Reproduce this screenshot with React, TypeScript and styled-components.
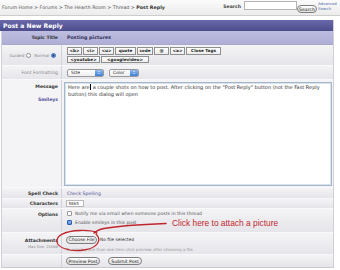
import React from 'react';
import styled, { createGlobalStyle } from 'styled-components';

const GlobalStyle = createGlobalStyle`
  html, body {
    margin: 0;
    padding: 0;
    background: #ffffff;
  }
  body {
    font-family: "DejaVu Sans", Verdana, sans-serif;
    color: #333;
  }
`;

const Page = styled.div`
  position: relative;
  width: 340px;
  height: 270px;
  overflow: hidden;
  background: #fff;
`;

const TopBar = styled.div`
  display: flex;
  align-items: center;
  height: 15px;
  padding-left: 2px;
  background: linear-gradient(#fbfbfb, #ececec);
  border-bottom: 1px solid #cdcdcd;
`;

const Crumbs = styled.div`
  font-size: 4.75px;
  color: #555;
  white-space: nowrap;

  b {
    color: #333;
  }
`;

const SearchArea = styled.div`
  margin-left: auto;
  display: flex;
  align-items: flex-start;
  height: 15px;
  padding-top: 1px;
  box-sizing: border-box;
`;

const SearchLabel = styled.span`
  font-size: 4.6px;
  font-weight: bold;
  color: #444;
  margin-top: 2.5px;
  margin-right: 3px;
`;

const SearchInput = styled.div`
  width: 53px;
  height: 9px;
  background: #fff;
  border: 1px solid #b5b5b5;
  box-sizing: border-box;
`;

const PillButton = styled.span<{ $w?: number }>`
  display: inline-flex;
  align-items: center;
  justify-content: center;
  height: 8px;
  padding: 0 ${({ $w }) => ($w ? 0 : 2)}px;
  width: ${({ $w }) => ($w ? `${$w}px` : 'auto')};
  box-sizing: border-box;
  border: 1px solid #7d7d7d;
  border-radius: 4px;
  background: linear-gradient(#ffffff, #e2e2e2);
  font-size: 4.6px;
  color: #222;
  white-space: nowrap;
  flex-shrink: 0;
`;

const SearchButton = styled(PillButton)`
  margin-top: 4px;
`;

const Advanced = styled.span`
  font-size: 3.8px;
  line-height: 5px;
  color: #4a5fa8;
  margin-left: 1px;
  width: 22px;
  overflow: hidden;
  white-space: nowrap;
`;

const Panel = styled.div`
  margin: 4px 6px 0 1px;
  border-left: 1px solid #cfcfd8;
  border-right: 1px solid #cfcfd8;
  border-bottom: 1px solid #c8c8d2;
`;

const Header = styled.div`
  height: 11px;
  display: flex;
  align-items: center;
  padding-left: 3px;
  background: linear-gradient(#6a6aaa, #4d4d8d);
  color: #fff;
  font-size: 6.1px;
  font-weight: bold;
  margin-left: -2px;
`;

const Row = styled.div<{ $h: number; $tone?: 'topic' | 'plain' }>`
  display: grid;
  grid-template-columns: 60px 1fr;
  height: ${({ $h }) => $h}px;
  box-sizing: border-box;
  border-bottom: 1px solid ${({ $tone }) => ($tone === 'topic' ? '#a9a9cf' : '#f9f9fb')};
  background: ${({ $tone }) =>
    $tone === 'topic'
      ? 'linear-gradient(#bdbde0, #afafd6)'
      : 'linear-gradient(#f4f4f6, #e5e5ea)'};
`;

const Label = styled.div<{ $light?: boolean; $top?: number }>`
  display: flex;
  flex-direction: column;
  align-items: flex-end;
  justify-content: ${({ $top }) => ($top !== undefined ? 'flex-start' : 'center')};
  padding-top: ${({ $top }) => $top ?? 0}px;
  padding-right: 3px;
  border-right: 1px solid #d2d2da;
  font-size: 4.6px;
  font-weight: ${({ $light }) => ($light ? 'normal' : 'bold')};
  color: ${({ $light }) => ($light ? '#858585' : '#333')};
  white-space: nowrap;
  gap: 2px;
`;

const SubNote = styled.span`
  font-size: 3.6px;
  font-weight: normal;
  color: #8a8a8a;
`;

const LinkText = styled.span<{ $bold?: boolean }>`
  color: #4f4f9c;
  font-weight: ${({ $bold }) => ($bold ? 'bold' : 'normal')};
  font-size: 4.6px;
`;

const Cell = styled.div<{ $col?: boolean; $pad?: number }>`
  display: flex;
  flex-direction: ${({ $col }) => ($col ? 'column' : 'row')};
  justify-content: ${({ $col }) => ($col ? 'center' : 'flex-start')};
  align-items: ${({ $col }) => ($col ? 'flex-start' : 'center')};
  padding-left: ${({ $pad }) => $pad ?? 4}px;
  gap: 1px;
  font-size: 4.6px;
  min-width: 0;
`;

const TopicValue = styled.span`
  font-weight: bold;
  color: #33335a;
  font-size: 4.8px;
`;

const RadioGroup = styled.div`
  display: flex;
  align-items: center;
  gap: 1.5px;
  font-size: 4.2px;
  color: #888;
  font-weight: normal;
`;

const Radio = styled.span<{ $on?: boolean }>`
  width: 5px;
  height: 5px;
  border-radius: 50%;
  box-sizing: border-box;
  margin-right: 2px;
  border: 1px solid ${({ $on }) => ($on ? '#3a6bb8' : '#8a8a8a')};
  background: ${({ $on }) =>
    $on ? 'radial-gradient(circle, #1c3f7a 0 0.8px, #6f9fe0 1.2px)' : '#fff'};
`;

const TagLine = styled.div`
  display: flex;
  gap: 1px;
`;

const Tag = styled.span<{ $w: number }>`
  display: inline-flex;
  align-items: center;
  justify-content: center;
  width: ${({ $w }) => $w}px;
  height: 7.5px;
  box-sizing: border-box;
  border: 1px solid #8f8f8f;
  background: linear-gradient(#ffffff, #ececec);
  font-size: 4.2px;
  font-weight: bold;
  color: #222;
  white-space: nowrap;
`;

const SelectBox = styled.span<{ $w: number }>`
  position: relative;
  display: inline-flex;
  align-items: center;
  width: ${({ $w }) => $w}px;
  height: 8px;
  box-sizing: border-box;
  border: 1px solid #9a9a9a;
  border-radius: 2px;
  background: linear-gradient(#ffffff, #eeeeee);
  padding-left: 3px;
  font-size: 4.4px;
  color: #222;
  margin-right: 4px;
`;

const Stepper = styled.span`
  position: absolute;
  right: 0;
  top: 0;
  bottom: 0;
  width: 8px;
  border-radius: 0 1px 1px 0;
  background: linear-gradient(#8cb9ee, #3f7fd6);
  display: flex;
  flex-direction: column;
  align-items: center;
  justify-content: center;
  gap: 0.6px;

  &::before,
  &::after {
    content: '';
    width: 0;
    height: 0;
    border-left: 1.4px solid transparent;
    border-right: 1.4px solid transparent;
  }
  &::before {
    border-bottom: 1.4px solid #fff;
  }
  &::after {
    border-top: 1.4px solid #fff;
  }
`;

const MessageCell = styled.div`
  padding: 2px 1px 1px 2px;
  background: #f4f4f6;
`;

const TextArea = styled.div`
  height: 104px;
  box-sizing: border-box;
  border: 1px solid #a6b6c9;
  box-shadow: inset 0 0 0 1px #d6e2ee;
  background: #fff;
  padding: 1px 3px;
  font-size: 5px;
  line-height: 6.5px;
  color: #333;
`;

const Caret = styled.span`
  border-left: 0.6px solid #000;
  margin-left: 0.5px;
`;

const CountBox = styled.span`
  display: inline-flex;
  align-items: center;
  width: 18px;
  height: 7px;
  box-sizing: border-box;
  border: 1px solid #b8b8b8;
  background: #fff;
  padding-left: 1.5px;
  font-size: 4px;
  color: #333;
`;

const CheckLine = styled.div`
  display: flex;
  align-items: center;
  gap: 3px;
  font-size: 4.6px;
  color: #555;
  height: 9px;
  padding-left: 1px;
`;

const Check = styled.span<{ $on?: boolean }>`
  width: 5px;
  height: 5px;
  box-sizing: border-box;
  border-radius: 1px;
  border: 1px solid ${({ $on }) => ($on ? '#2f61b3' : '#999')};
  background: ${({ $on }) => ($on ? 'linear-gradient(#7eaeea, #2f6ccb)' : '#fff')};
  color: #fff;
  font-size: 4px;
  line-height: 3px;
  text-align: center;
  font-weight: bold;
`;

const FileLine = styled.div`
  display: flex;
  align-items: center;
  gap: 3px;
  font-size: 4.4px;
  color: #333;
`;

const Hint = styled.span`
  font-size: 4px;
  color: #9a9a9a;
  margin-top: 2px;
`;

const ButtonLine = styled.div`
  display: flex;
  gap: 8px;
`;

const Callout = styled.div`
  position: absolute;
  left: 172px;
  top: 218px;
  font-family: "Liberation Sans", Arial, sans-serif;
  font-size: 8.4px;
  color: #c0272d;
  white-space: nowrap;
`;

const Ink = styled.svg`
  position: absolute;
  left: 0;
  top: 0;
  pointer-events: none;
`;

const tags1: [string, number][] = [
  ['<b>', 15],
  ['<i>', 15],
  ['<u>', 15],
  ['quote', 21],
  ['code', 16],
  ['@', 15],
  ['<a>', 15],
  ['Close Tags', 35],
];

const tags2: [string, number][] = [
  ['<youtube>', 33],
  ['<googlevideo>', 48],
];

export default function App() {
  return (
    <Page>
      <GlobalStyle />
      <TopBar>
        <Crumbs>
          Forum Home &gt; Forums &gt; The Hearth Room &gt; Thread &gt; <b>Post Reply</b>
        </Crumbs>
        <SearchArea>
          <SearchLabel>Search</SearchLabel>
          <SearchInput />
          <SearchButton $w={20}>Search</SearchButton>
          <Advanced>
            Advanced
            <br />
            Search
          </Advanced>
        </SearchArea>
      </TopBar>

      <Panel>
        <Header>Post a New Reply</Header>

        <Row $h={14} $tone="topic">
          <Label style={{ borderRightColor: 'transparent' }}>Topic Title</Label>
          <Cell $pad={5}>
            <TopicValue>Posting pictures</TopicValue>
          </Cell>
        </Row>

        <Row $h={21}>
          <Label $light>
            <RadioGroup>
              Guided <Radio /> Normal <Radio $on />
            </RadioGroup>
          </Label>
          <Cell $col $pad={5}>
            <TagLine>
              {tags1.map(([t, w]) => (
                <Tag key={t} $w={w}>
                  {t}
                </Tag>
              ))}
            </TagLine>
            <TagLine>
              {tags2.map(([t, w]) => (
                <Tag key={t} $w={w}>
                  {t}
                </Tag>
              ))}
            </TagLine>
          </Cell>
        </Row>

        <Row $h={14}>
          <Label $light>Font Formatting</Label>
          <Cell $pad={5}>
            <SelectBox $w={37}>
              Size
              <Stepper />
            </SelectBox>
            <SelectBox $w={30}>
              Color
              <Stepper />
            </SelectBox>
          </Cell>
        </Row>

        <Row $h={108} style={{ background: '#f4f4f6' }}>
          <Label $top={4}>
            Message
            <LinkText $bold style={{ marginTop: 6 }}>
              Smileys
            </LinkText>
          </Label>
          <MessageCell>
            <TextArea>
              Here are<Caret /> a couple shots on how to post. After clicking on the "Post Reply" button (not the
              Fast Reply button) this dialog will open
            </TextArea>
          </MessageCell>
        </Row>

        <Row $h={11}>
          <Label>Spell Check</Label>
          <Cell $pad={5}>
            <LinkText>Check Spelling</LinkText>
          </Cell>
        </Row>

        <Row $h={10}>
          <Label>Characters</Label>
          <Cell>
            <CountBox>5865</CountBox>
          </Cell>
        </Row>

        <Row $h={24}>
          <Label $top={3}>Options</Label>
          <Cell $col style={{ justifyContent: 'flex-start', gap: 0 }}>
            <CheckLine>
              <Check />
              Notify me via email when someone posts in this thread
            </CheckLine>
            <CheckLine>
              <Check $on>✓</Check>
              Enable smileys in this post
            </CheckLine>
          </Cell>
        </Row>

        <Row $h={22}>
          <Label>
            Attachments
            <SubNote>Max Size: 250KB</SubNote>
          </Label>
          <Cell $col>
            <FileLine>
              <PillButton $w={31}>Choose File</PillButton>
              No file selected
            </FileLine>
            <Hint>To select more than one item click preview after choosing a file</Hint>
          </Cell>
        </Row>

        <Row $h={12} style={{ borderBottom: 'none' }}>
          <Label />
          <Cell>
            <ButtonLine>
              <PillButton $w={34}>Preview Post</PillButton>
              <PillButton $w={34}>Submit Post</PillButton>
            </ButtonLine>
          </Cell>
        </Row>
      </Panel>

      <Callout>Click here to attach a picture</Callout>
      <Ink width={340} height={270} viewBox="0 0 340 270">
        <path
          d="M166 223.5 C 140 224.5, 118 226, 104 228.5 C 99 229.5, 96 231, 94 233"
          fill="none"
          stroke="#c0272d"
          strokeWidth={1.6}
          strokeLinecap="round"
        />
        <path
          d="M96 234 C 102 240, 98 248, 84 250 C 70 252, 58 248, 57 242 C 56 236, 64 231, 80 230.5 C 88 230.3, 94 231, 97 233"
          fill="none"
          stroke="#c0272d"
          strokeWidth={1.3}
          strokeLinecap="round"
        />
      </Ink>
    </Page>
  );
}
